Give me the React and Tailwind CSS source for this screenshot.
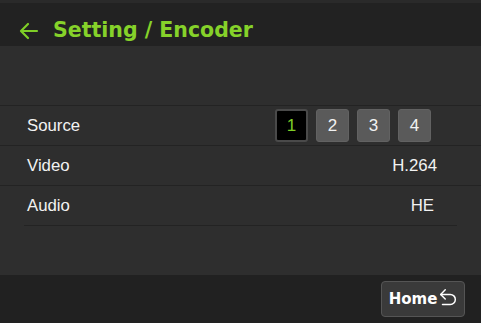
import React from "react";

const Row = ({ label, children }) => (
  <div className="flex h-[40px] items-center justify-between border-b border-[#232323] pl-[27px] pr-[44px]">
    <span className="text-[16.8px] text-[#f2f2f2]">{label}</span>
    {children}
  </div>
);

export default function App() {
  return (
    <div className="flex h-[323px] w-[481px] flex-col bg-[#2e2e2e]" style={{ fontFamily: '"Liberation Sans", Arial, sans-serif' }}>
      <div className="flex h-[46px] items-center gap-[14px] border-t-[3px] border-[#2a2a2a] bg-[#222222] pl-[19px] pt-[12px]">
        <svg width="20" height="18" viewBox="0 0 20 18" fill="none" stroke="#7fce27" strokeWidth="2.2" strokeLinecap="round" strokeLinejoin="round">
          <path d="M18 9H3M9 2 2 9l7 7" />
        </svg>
        <span className="text-[20.5px] font-bold text-[#86d22a]" style={{ fontFamily: '"DejaVu Sans", Verdana, sans-serif' }}>Setting / Encoder</span>
      </div>
      <div className="flex flex-1 flex-col">
        <div className="h-[60px] border-b border-[#232323]" />
        <Row label="Source">
          <div className="mr-[6px] flex gap-[8px]">
            {[1, 2, 3, 4].map((n) => (
              <div
                key={n}
                className={`flex h-[33px] w-[33px] items-center justify-center rounded-[3px] text-[17px] ${n === 1 ? "border-2 border-[#4a4a4a] bg-black text-[#7fce27]" : "border border-[#626262] bg-[#5a5a5a] text-[#f2f2f2]"}`}
              >
                {n}
              </div>
            ))}
          </div>
        </Row>
        <Row label="Video">
          <span className="text-[16.8px] text-[#f2f2f2]">H.264</span>
        </Row>
        <div className="mx-[24px] flex h-[40px] items-center justify-between border-b border-[#232323] pl-[3px] pr-[23px]">
          <span className="text-[16.8px] text-[#f2f2f2]">Audio</span>
          <span className="text-[16.8px] text-[#f2f2f2]">HE</span>
        </div>
      </div>
      <div className="flex h-[48px] items-center justify-end bg-[#212121] pr-[16px]">
        <div className="flex h-[36px] w-[84px] items-center justify-center gap-0 rounded-[4px] border border-[#555555] bg-[#3a3a3a] pl-[2px]">
          <span className="text-[15px] font-bold text-white" style={{ fontFamily: '"DejaVu Sans", Verdana, sans-serif' }}>Home</span>
          <svg width="22" height="22" viewBox="0 0 24 24" fill="none" stroke="#ffffff" strokeWidth="1.6" strokeLinecap="round" strokeLinejoin="round">
            <path d="M9 12 4 7l5-5" />
            <path d="M4 7h10.5a5.5 5.5 0 0 1 5.5 5.5a5.5 5.5 0 0 1-5.5 5.5H6" />
          </svg>
        </div>
      </div>
    </div>
  );
}
